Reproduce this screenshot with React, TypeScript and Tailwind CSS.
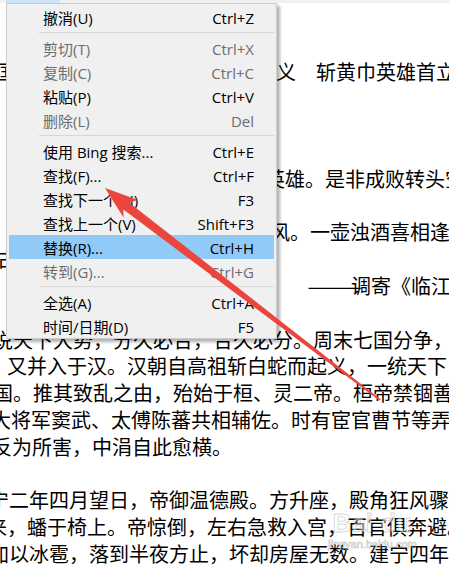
type Line = { text: string; x: number };

// background notepad text, horizontally scrolled so most lines start left of the window
const lines: Line[] = [
  { text: "", x: 0 },
  { text: "", x: 0 },
  { text: "三国演义第一回　宴桃园豪杰三结义　斩黄巾英雄首立功", x: -24 },
  { text: "", x: 0 },
  { text: "", x: 0 },
  { text: "", x: 0 },
  { text: "滚滚长江东逝水，浪花淘尽英雄。是非成败转头空。", x: 25 },
  { text: "青山依旧在，几度夕阳红。", x: 25 },
  { text: "白发渔樵江渚上，惯看秋月春风。一壶浊酒喜相逢。", x: 10 },
  { text: "古今多少事，都付笑谈中。", x: -3 },
  { text: "", x: 0 },
  { text: "", x: 0 },
  { text: "话说天下大势，分久必合，合久必分。周末七国分争，并入于秦。", x: -27 },
  { text: "争，又并入于汉。汉朝自高祖斩白蛇而起义，一统天下，后来光武中兴", x: -33 },
  { text: "三国。推其致乱之由，殆始于桓、灵二帝。桓帝禁锢善类，崇信宦官。", x: -27 },
  { text: "位，大将军窦武、太傅陈蕃共相辅佐。时有宦官曹节等弄权", x: -49 },
  { text: "密，反为所害，中涓自此愈横。", x: -48 },
  { text: "", x: 0 },
  { text: "建宁二年四月望日，帝御温德殿。方升座，殿角狂风骤起。", x: -31 },
  { text: "下来，蟠于椅上。帝惊倒，左右急救入宫，百官俱奔避。", x: -33 },
  { text: "，加以冰雹，落到半夜方止，坏却房屋无数。建宁四年二月", x: -31 },
  { text: "", x: 0 },
];

type Item =
  | { kind: "sep" }
  | { kind: "item"; label: string; keys: string; disabled?: boolean; active?: boolean };

const menu: Item[] = [
  { kind: "item", label: "撤消(U)", keys: "Ctrl+Z" },
  { kind: "sep" },
  { kind: "item", label: "剪切(T)", keys: "Ctrl+X", disabled: true },
  { kind: "item", label: "复制(C)", keys: "Ctrl+C", disabled: true },
  { kind: "item", label: "粘贴(P)", keys: "Ctrl+V" },
  { kind: "item", label: "删除(L)", keys: "Del", disabled: true },
  { kind: "sep" },
  { kind: "item", label: "使用 Bing 搜索...", keys: "Ctrl+E" },
  { kind: "item", label: "查找(F)...", keys: "Ctrl+F" },
  { kind: "item", label: "查找下一个(N)", keys: "F3" },
  { kind: "item", label: "查找上一个(V)", keys: "Shift+F3" },
  { kind: "item", label: "替换(R)...", keys: "Ctrl+H", active: true },
  { kind: "item", label: "转到(G)...", keys: "Ctrl+G", disabled: true },
  { kind: "sep" },
  { kind: "item", label: "全选(A)", keys: "Ctrl+A" },
  { kind: "item", label: "时间/日期(D)", keys: "F5" },
];

function EditMenu() {
  return (
    <div className="absolute left-[6px] top-[3px] w-[271px] border border-[#cccccc] bg-[#f0f0f0] pt-px shadow-[3px_3px_3px_rgba(0,0,0,0.3)] font-['Open_Sans','Noto_Sans_CJK_SC',sans-serif] text-[15px]">
      {menu.map((m, i) =>
        m.kind === "sep" ? (
          <div key={i} className="pt-[3px] pb-[3px] pl-[32px] pr-[2px]">
            <div className="h-px bg-[#d7d7d7]" />
          </div>
        ) : (
          <div
            key={i}
            className={
              "mx-[2px] flex h-[24px] items-center justify-between pl-[34px] pr-[20px] leading-none " +
              (m.active ? "bg-[#91c9f7] " : "") +
              (m.disabled ? "text-[#6d6d6d]" : "text-black")
            }
          >
            <span className="pt-[2px]">{m.label}</span>
            <span className="pt-[2px]">{m.keys}</span>
          </div>
        )
      )}
    </div>
  );
}

function Arrow() {
  return (
    <svg
      className="pointer-events-none absolute left-0 top-0"
      width="449"
      height="564"
      viewBox="0 0 449 564"
    >
      <polygon
        fill="#ea463e"
        points="105,188 138,200 129,202.5 380.8,399.4 379.2,400.6 123.4,209.6 123.5,217.5"
      />
    </svg>
  );
}

export default function App() {
  return (
    <div className="relative h-[564px] w-[449px] overflow-hidden bg-white">
      {/* menu bar remnant */}
      <div className="flex h-[3px] bg-[#f0f0f0]">
        <div className="ml-[6px] w-[54px] bg-[#cce4f7]" />
      </div>

      <div className="pt-[2px] font-['Noto_Sans_CJK_SC',sans-serif] text-[20px] leading-[26.8px] text-black">
        {lines.map((l, i) =>
          i === 10 ? (
            <div key={i} className="flex h-[26.8px] whitespace-pre pl-[307px]">
              <span className="inline-block w-[44px] shrink-0 origin-left scale-x-[1.65]">——</span>
              <span className="shrink-0">调寄《临江仙》</span>
            </div>
          ) : (
            <div key={i} className="h-[26.8px] whitespace-pre" style={{ marginLeft: l.x }}>
              {l.text}
            </div>
          )
        )}
      </div>

      {/* watermark */}
      <div className="absolute left-[328px] top-[508px] flex flex-col items-center font-['Liberation_Sans',sans-serif] text-white/50 [-webkit-text-stroke:1px_rgba(0,0,0,0.18)]">
        <div className="text-[26px] font-bold leading-[30px]">Bai du</div>
        <div className="text-[11px] leading-[12px]">jingyan.baidu.com</div>
      </div>

      <EditMenu />
      <Arrow />
    </div>
  );
}
